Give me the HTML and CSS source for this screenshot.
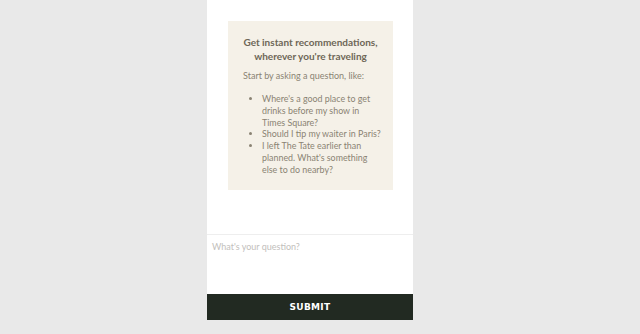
FILE: index.html
```html
<!DOCTYPE html>
<html lang="en">
<head>
  <meta charset="UTF-8">
  <title>Travel assistant</title>
  <link rel="stylesheet" href="styles.css">
</head>
<body>

  <div class="app">
    <div class="chat">
      <div class="intro">
        <h2>Get instant recommendations, wherever you're traveling</h2>
        <p>Start by asking a question, like:</p>
        <ul>
          <li>Where's a good place to get drinks before my show in Times Square?</li>
          <li>Should I tip my waiter in Paris?</li>
          <li>I left The Tate earlier than planned. What's something else to do nearby?</li>
        </ul>
      </div>
    </div>

    <form class="ask">
      <textarea placeholder="What's your question?"></textarea>
      <button type="button">SUBMIT</button>
    </form>
  </div>

</body>
</html>
```

FILE: styles.css
```css
body { margin: 0; background: #e9e9e9; font-family: 'Lato', 'Noto Sans', sans-serif; }
.app { width: 206px; height: 320px; margin-left: 207px; background: white; display: flex; flex-direction: column; }
.chat { flex: 1; padding: 21px 20px 0 21px; border-bottom: 1px solid #eeeeee; }
.intro { background: #f5f1e8; padding: 15px 15px 14px; color: #8a8373; }
.intro h2 { margin: 0; font-size: 10px; line-height: 13.5px; text-align: center; color: #6e6757; font-weight: bold; }
.intro p { margin: 7px 0 0; font-size: 9px; line-height: 12px; }
.intro ul { margin: 11px -6px 0 0; padding-left: 19px; font-size: 8.9px; line-height: 11.8px; }
.ask { display: flex; flex-direction: column; }
.ask textarea { height: 59px; border: none; resize: none; padding: 6px 5px; box-sizing: border-box; font-family: inherit; font-size: 9px; outline: none; }
.ask textarea::placeholder { color: #c2c0bc; }
.ask button { height: 26px; border: none; background: #222a22; color: white; font-family: 'DejaVu Sans', sans-serif; font-weight: bold; font-size: 9px; letter-spacing: 0.3px; }
```
